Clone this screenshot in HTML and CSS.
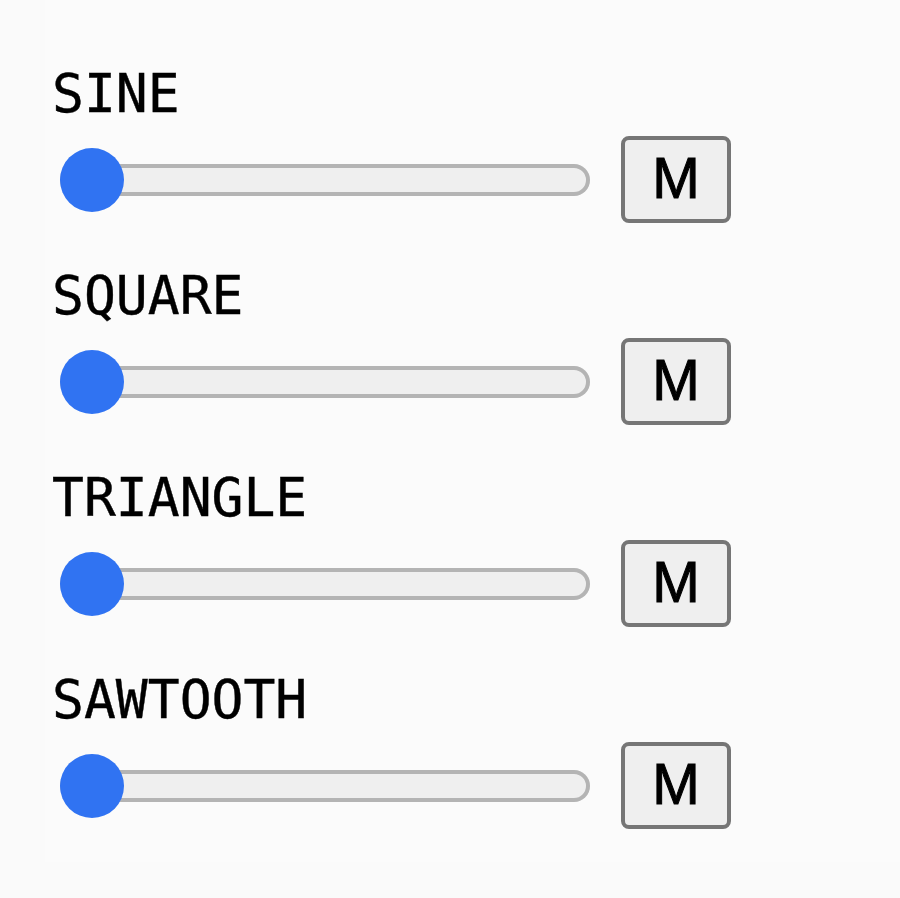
FILE: index.html
```html
<!DOCTYPE html>
<html lang="en">
<head>
  <meta charset="UTF-8">
  <title>Oscillators</title>
  <link rel="stylesheet" href="styles.css">
</head>
<body>

  <div class="panel">
    <div class="osc">
      <div class="osc-label">SINE</div>
      <div class="osc-row">
        <input type="range" class="volume" min="0" max="100" value="0">
        <button class="mute">M</button>
      </div>
    </div>

    <div class="osc">
      <div class="osc-label">SQUARE</div>
      <div class="osc-row">
        <input type="range" class="volume" min="0" max="100" value="0">
        <button class="mute">M</button>
      </div>
    </div>

    <div class="osc">
      <div class="osc-label">TRIANGLE</div>
      <div class="osc-row">
        <input type="range" class="volume" min="0" max="100" value="0">
        <button class="mute">M</button>
      </div>
    </div>

    <div class="osc">
      <div class="osc-label">SAWTOOTH</div>
      <div class="osc-row">
        <input type="range" class="volume" min="0" max="100" value="0">
        <button class="mute">M</button>
      </div>
    </div>
  </div>

</body>
</html>
```

FILE: styles.css
```css
body {
  margin: 0;
  background-color: #fafafa;
  color: #000;
}

.panel {
  margin-left: 45px;
  height: 862px;
  padding: 62px 0 0 7px;
  box-sizing: border-box;
  background-color: #fbfbfb;
}

.osc {
  margin-bottom: 41px;
}

.osc-label {
  font-family: "DejaVu Sans Mono", monospace;
  font-size: 53px;
  line-height: 64px;
  height: 64px;
  margin-bottom: 10px;
  -webkit-text-stroke: 0.4px #000;
}

.osc-row {
  display: flex;
  align-items: center;
  height: 87px;
}

.volume {
  -webkit-appearance: none;
  appearance: none;
  width: 530px;
  height: 64px;
  margin: 0 31px 0 8px;
  padding: 0;
  background: transparent;
}

.volume::-webkit-slider-runnable-track {
  height: 32px;
  border-radius: 16px;
  background-color: #efefef;
  box-shadow: inset 0 0 0 4px #b4b4b4;
}

.volume::-webkit-slider-thumb {
  -webkit-appearance: none;
  width: 64px;
  height: 64px;
  margin-top: -16px;
  border: none;
  border-radius: 50%;
  background-color: #3073f2;
}

.mute {
  width: 110px;
  height: 87px;
  padding: 0 0 4px;
  border: 4px solid #767676;
  border-radius: 8px;
  background-color: #efefef;
  font-family: "Liberation Sans", Arial, sans-serif;
  font-size: 57px;
  color: #000;
  -webkit-text-stroke: 1px #000;
}
```
